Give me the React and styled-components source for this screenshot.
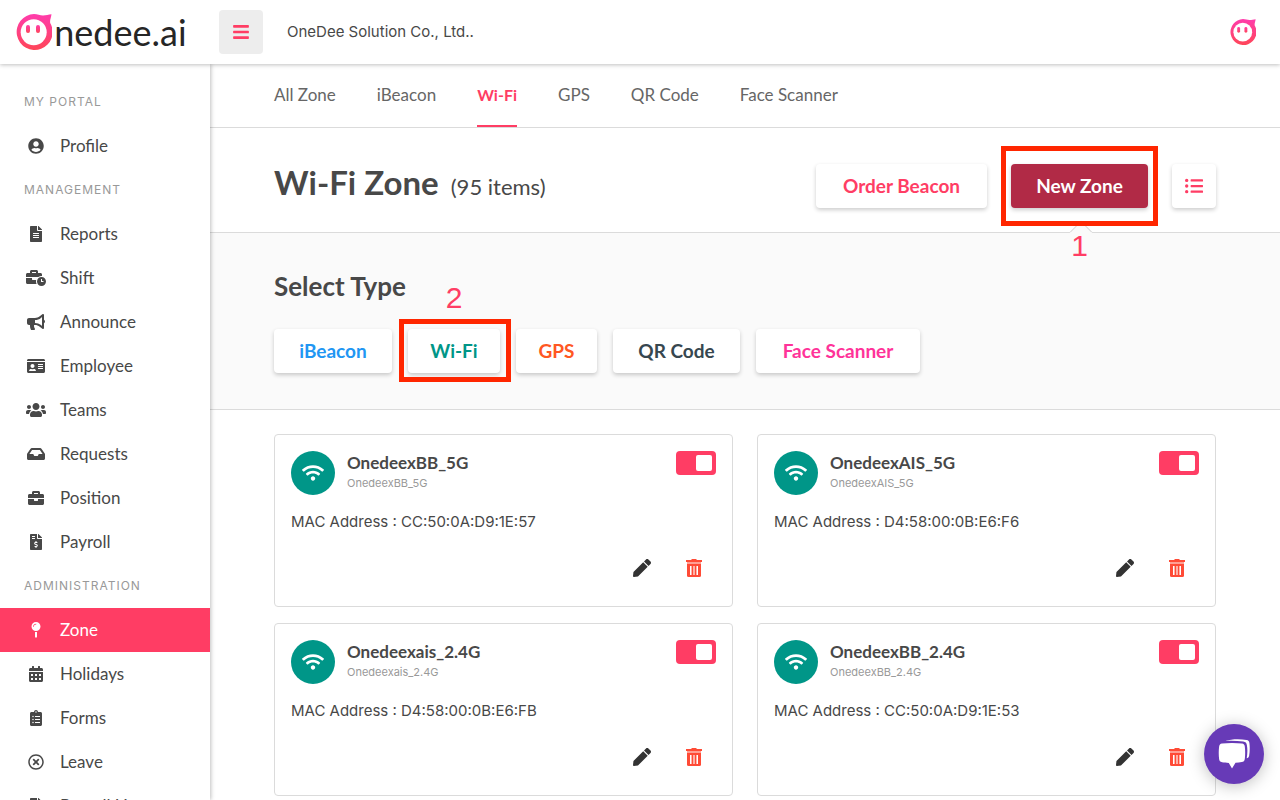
import React from 'react';
import styled, { createGlobalStyle, css } from 'styled-components';
import {
  FaBars, FaUserCircle, FaFileAlt, FaBusinessTime, FaBullhorn, FaIdCard, FaUsers, FaInbox,
  FaBriefcase, FaFileInvoiceDollar, FaMapPin, FaCalendarAlt, FaClipboardList,
  FaRegTimesCircle, FaListUl, FaWifi, FaPen,
} from 'react-icons/fa';

const pink = '#ff3d64';
const ink = '#484848';
const line = '#dbdbdb';

const Global = createGlobalStyle`
  * { box-sizing: border-box; }
  body { margin: 0; background: #fff; color: ${ink}; font: 17px/24px Lato, sans-serif; }
  button { font: inherit; border: 0; margin: 0; padding: 0; cursor: pointer; }
  a { color: inherit; text-decoration: none; }
  h1, h2, h3, p, ul { margin: 0; padding: 0; }
  ul { list-style: none; }
`;

const Header = styled.header`
  position: sticky;
  top: 0;
  z-index: 5;
  display: flex;
  align-items: center;
  height: 64px;
  padding: 0 24px 0 16px;
  background: #fff;
  box-shadow: 0 1px 4px rgba(0, 0, 0, 0.25);
`;

const Logo = styled.a`
  display: flex;
  align-items: center;
  width: 203px;
  font-size: 36px;
  line-height: 40px;
  color: #262626;
`;

const MenuButton = styled.button`
  display: grid;
  place-items: center;
  width: 44px;
  height: 44px;
  border-radius: 4px;
  background: #ededed;
  color: ${pink};
  font-size: 18px;
`;

const Company = styled.span`
  flex: 1;
  padding-left: 24px;
  font: 15px/24px Inter, sans-serif;
`;

const Avatar = styled.a`
  display: flex;
`;

const Body = styled.div`
  display: flex;
  align-items: flex-start;
`;

const SidebarFrame = styled.div`
  position: sticky;
  top: 64px;
  z-index: 4;
  flex: none;
  box-shadow: 1px 0 4px rgba(0, 0, 0, 0.25);
`;

const Sidebar = styled.nav`
  width: 210px;
  height: calc(100vh - 64px);
  padding-top: 16px;
  overflow: hidden;
  background: #fff;
`;

const SectionLabel = styled.h2`
  padding-left: 24px;
  font: 400 12px/44px Inter, sans-serif;
  letter-spacing: 1px;
  color: #999;
`;

const NavItem = styled.a`
  display: flex;
  align-items: center;
  gap: 12px;
  height: 44px;
  padding-left: 24px;
  ${(p) => p.$active && css`background: ${pink}; color: #fff;`}
`;

const NavIcon = styled.span`
  display: flex;
  width: 24px;
  svg { width: 24px; height: 16px; }
`;

const Main = styled.main`
  flex: 1;
  min-width: 0;
`;

const Tabs = styled.nav`
  display: flex;
  gap: 41px;
  height: 64px;
  padding: 0 64px;
  border-bottom: 1px solid ${line};
`;

const Tab = styled.a`
  line-height: 62px;
  color: #666;
  ${(p) => p.$active && css`
    font-size: 16px;
    line-height: 61px;
    font-weight: 700;
    color: ${pink};
    border-bottom: 2px solid ${pink};
  `}
`;

const TitleBar = styled.section`
  display: flex;
  align-items: center;
  height: 105px;
  padding: 12px 64px 0;
  border-bottom: 1px solid ${line};
`;

const Title = styled.h1`
  flex: 1;
  padding-bottom: 4px;
  font-size: 33px;
  line-height: 44px;
  small { font-size: 22px; font-weight: 400; margin-left: 4px; }
`;

const Actions = styled.div`
  display: flex;
  gap: 24px;
`;

const Button = styled.button`
  width: ${(p) => p.$width}px;
  height: 44px;
  border-radius: 4px;
  font-size: 19px;
  font-weight: 700;
  white-space: nowrap;
  background: ${(p) => p.$bg || '#fff'};
  color: ${(p) => p.$color || pink};
  box-shadow: 0 2px 4px rgba(0, 0, 0, 0.2);
`;

const IconButton = styled(Button)`
  display: grid;
  place-items: center;
  font-size: 18px;
`;

const Marked = styled.div`
  position: relative;
`;

const MarkFrame = styled.span`
  position: absolute;
  inset: ${(p) => p.$inset};
  z-index: 2;
  border: 5px solid #ff2600;
  pointer-events: none;
`;

const MarkNumber = styled.span`
  position: absolute;
  left: 0;
  right: 0;
  ${(p) => (p.$above ? 'bottom: 59px;' : 'top: 66px;')}
  z-index: 2;
  text-align: center;
  font: 30px/32px "Liberation Sans", sans-serif;
  color: ${pink};
`;

const Notch = styled.span`
  position: absolute;
  top: 60px;
  left: 50%;
  width: 16px;
  height: 16px;
  margin-left: -7px;
  transform: rotate(45deg);
  border: 1px solid ${line};
  border-right-color: transparent;
  border-bottom-color: transparent;
  background: #fafafa;
`;

const TypePanel = styled.section`
  height: 177px;
  padding: 36px 64px;
  border-bottom: 1px solid ${line};
  background: #fafafa;
`;

const PanelTitle = styled.h2`
  margin-bottom: 26px;
  font-size: 26px;
  line-height: 34px;
`;

const TypeRow = styled.div`
  display: flex;
  gap: 16px;
`;

const Grid = styled.ul`
  display: grid;
  grid-template-columns: 1fr 1fr;
  gap: 16px 24px;
  padding: 24px 64px 4px;
`;

const Card = styled.li`
  display: flex;
  flex-direction: column;
  height: 173px;
  padding: 16px;
  border: 1px solid ${line};
  border-radius: 4px;
  font-family: Inter, sans-serif;
`;

const CardHead = styled.div`
  display: flex;
  align-items: flex-start;
  gap: 12px;
`;

const WifiBadge = styled.span`
  display: grid;
  place-items: center;
  width: 44px;
  height: 44px;
  border-radius: 50%;
  background: #009688;
  color: #fff;
  font-size: 22px;
`;

const Names = styled.div`
  flex: 1;
`;

const Ssid = styled.h3`
  font: 700 17px/24px Lato, sans-serif;
`;

const Alias = styled.p`
  font-size: 11px;
  line-height: 16px;
  color: #999;
`;

const Toggle = styled.input`
  appearance: none;
  display: flex;
  justify-content: flex-end;
  width: 40px;
  height: 24px;
  margin: 0;
  padding: 4px;
  border-radius: 4px;
  background: #bbb;
  &:checked { background: ${pink}; }
  &::after { content: ''; width: 16px; height: 16px; border-radius: 2px; background: #fff; }
`;

const Mac = styled.p`
  padding-top: 15px;
  font-size: 15px;
  line-height: 24px;
`;

const CardActions = styled.div`
  display: flex;
  justify-content: flex-end;
  gap: 8px;
  margin-top: auto;
`;

const PlainButton = styled.button`
  display: grid;
  place-items: center;
  width: 44px;
  height: 44px;
  background: none;
  color: #333;
  font-size: 18px;
`;

const ChatButton = styled.button`
  position: fixed;
  right: 16px;
  bottom: 16px;
  z-index: 6;
  display: grid;
  place-items: center;
  width: 60px;
  height: 60px;
  border-radius: 50%;
  background: #673ab7;
  box-shadow: 0 2px 16px rgba(0, 0, 0, 0.25);
`;

function Face({ size, id }) {
  return (
    <svg width={size} height={size} viewBox="0 0 36 36" aria-hidden="true">
      <defs>
        <linearGradient id={id} x1="0" y1="0" x2="0" y2="1">
          <stop offset="0" stopColor="#ff3cac" />
          <stop offset="1" stopColor="#ff4658" />
        </linearGradient>
      </defs>
      <path fill={`url(#${id})`} d="M18 0c3.500 0 6 1.400 9 1.400 3 0 5.500-.7 8.500-1.100-.4 3.600-1.800 5.600-1.300 8.600A18 18 0 1 1 18 0Z" />
      <circle cx="17.700" cy="18.300" r="13" fill="#fff" />
      <rect x="10" y="11" width="4" height="8" rx="2" fill={`url(#${id})`} />
      <rect x="20" y="11" width="4" height="8" rx="2" fill={`url(#${id})`} />
    </svg>
  );
}

function TrashIcon() {
  return (
    <svg width="16" height="18" viewBox="0 0 16 18" aria-hidden="true">
      <path fill="#ff4b36" d="M0 1h5l1-1h4l1 1h5v2H0z" />
      <path fill="#ff9f94" d="M1 3h14v2H1z" />
      <path fill="#ff4b36" d="M1 5h14v11.500a1.500 1.500 0 0 1-1.500 1.500h-11A1.500 1.500 0 0 1 1 16.500z" />
      <path fill="#fff" d="M4 7h1v9H4zM11 7h1v9h-1z" />
      <path fill="#ffb0a6" d="M5 7h1v9H5zM7 7h2v9H7zM10 7h1v9h-1z" />
    </svg>
  );
}

function ChatIcon() {
  return (
    <svg width="32" height="30" viewBox="0 0 32 30" aria-hidden="true">
      <path fill="#fff" d="M4 4.600C10 3.700 18 3.700 24 4.600c1.800.3 2.600 1.300 2.800 3 .5 4 .5 8.400 0 12.300-.3 2-1.200 2.900-3 3.200-2 .3-4 .5-6.300.7L14 29.500l-3.200-5.600c-2.600-.1-4.600-.4-6.700-.7-1.900-.3-2.800-1.300-3-3.200-.5-4-.5-8.400 0-12.300.2-1.800 1.100-2.800 2.900-3.100Z" />
      <path fill="#fff" d="M7 2C14-.1 22-.1 28.500 1c1.900.3 2.700 1.300 2.900 3 .6 4.500.4 9-.3 13-.3 1.300-1 2-2.400 2.200.8-4.500.9-9 .2-13-.3-2.200-1.400-3.300-3.600-3.600C19.500 1.800 13 1.600 7 2Z" />
    </svg>
  );
}

const sections = [
  ['MY PORTAL', [['Profile', FaUserCircle]]],
  ['MANAGEMENT', [
    ['Reports', FaFileAlt], ['Shift', FaBusinessTime], ['Announce', FaBullhorn],
    ['Employee', FaIdCard], ['Teams', FaUsers], ['Requests', FaInbox],
    ['Position', FaBriefcase], ['Payroll', FaFileInvoiceDollar],
  ]],
  ['ADMINISTRATION', [
    ['Zone', FaMapPin], ['Holidays', FaCalendarAlt], ['Forms', FaClipboardList],
    ['Leave', FaRegTimesCircle], ['Payroll List', FaFileInvoiceDollar],
  ]],
];

const tabs = ['All Zone', 'iBeacon', 'Wi-Fi', 'GPS', 'QR Code', 'Face Scanner'];

const types = [
  ['iBeacon', '#2196f3', 118],
  ['Wi-Fi', '#009688', 92],
  ['GPS', '#ff5722', 81],
  ['QR Code', '#37474f', 127],
  ['Face Scanner', '#ff3399', 164],
];

const zones = [
  ['OnedeexBB_5G', 'CC:50:0A:D9:1E:57'],
  ['OnedeexAIS_5G', 'D4:58:00:0B:E6:F6'],
  ['Onedeexais_2.4G', 'D4:58:00:0B:E6:FB'],
  ['OnedeexBB_2.4G', 'CC:50:0A:D9:1E:53'],
];

export default function App() {
  return (
    <>
      <Global />
      <Header>
        <Logo href="#"><Face size={36} id="logo" /><span>&#8202;nedee.ai</span></Logo>
        <MenuButton aria-label="Menu"><FaBars /></MenuButton>
        <Company>OneDee Solution Co., Ltd..</Company>
        <Avatar href="#" aria-label="Account"><Face size={26} id="avatar" /></Avatar>
      </Header>
      <Body>
        <SidebarFrame>
          <Sidebar>
            {sections.map(([label, items]) => (
              <React.Fragment key={label}>
                <SectionLabel>{label}</SectionLabel>
                {items.map(([name, Icon]) => (
                  <NavItem href="#" key={name} $active={name === 'Zone'}>
                    <NavIcon><Icon /></NavIcon>
                    {name}
                  </NavItem>
                ))}
              </React.Fragment>
            ))}
          </Sidebar>
        </SidebarFrame>
        <Main>
          <Tabs>
            {tabs.map((t) => <Tab href="#" key={t} $active={t === 'Wi-Fi'}>{t}</Tab>)}
          </Tabs>
          <TitleBar>
            <Title>Wi-Fi Zone <small>(95 items)</small></Title>
            <Actions>
              <Button $width={171}>Order Beacon</Button>
              <Marked>
                <Notch />
                <Button $width={137} $bg="#b12a46" $color="#fff">New Zone</Button>
                <MarkFrame $inset="-18px -10px" />
                <MarkNumber>1</MarkNumber>
              </Marked>
              <IconButton $width={44} aria-label="List view"><FaListUl /></IconButton>
            </Actions>
          </TitleBar>
          <TypePanel>
            <PanelTitle>Select Type</PanelTitle>
            <TypeRow>
              {types.map(([name, color, width]) => (
                <Marked key={name}>
                  <Button $color={color} $width={width}>{name}</Button>
                  {name === 'Wi-Fi' && (
                    <>
                      <MarkFrame $inset="-10px -11px -9px -9px" />
                      <MarkNumber $above>2</MarkNumber>
                    </>
                  )}
                </Marked>
              ))}
            </TypeRow>
          </TypePanel>
          <Grid>
            {zones.map(([name, mac]) => (
              <Card key={name}>
                <CardHead>
                  <WifiBadge><FaWifi /></WifiBadge>
                  <Names>
                    <Ssid>{name}</Ssid>
                    <Alias>{name}</Alias>
                  </Names>
                  <Toggle type="checkbox" defaultChecked aria-label={`Enable ${name}`} />
                </CardHead>
                <Mac>MAC Address : {mac}</Mac>
                <CardActions>
                  <PlainButton aria-label={`Edit ${name}`}><FaPen /></PlainButton>
                  <PlainButton aria-label={`Delete ${name}`}><TrashIcon /></PlainButton>
                </CardActions>
              </Card>
            ))}
          </Grid>
        </Main>
      </Body>
      <ChatButton aria-label="Open chat"><ChatIcon /></ChatButton>
    </>
  );
}
